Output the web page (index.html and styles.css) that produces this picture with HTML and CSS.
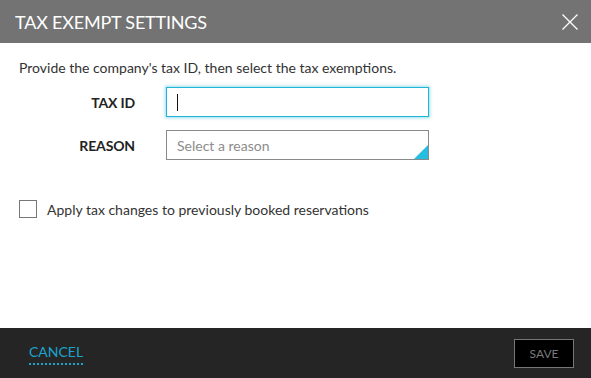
FILE: index.html
```html
<!DOCTYPE html>
<html>
<head>
<meta charset="utf-8">
<link rel="stylesheet" href="styles.css">
</head>
<body>
<div class="dialog">
  <header class="dlg-header">
    <h1 class="dlg-title">TAX EXEMPT SETTINGS</h1>
    <button class="dlg-close" aria-label="Close">
      <svg width="16" height="16" viewBox="0 0 16 16"><path d="M0.5 0.5 L15.5 15.5 M15.5 0.5 L0.5 15.5" stroke="#fff" stroke-width="1.3" fill="none"/></svg>
    </button>
  </header>
  <main class="dlg-body">
    <p class="intro">Provide the company's tax ID, then select the tax exemptions.</p>
    <div class="form-grid">
      <label class="field-label">TAX ID</label>
      <div class="input focused"><span class="caret"></span></div>
      <label class="field-label">REASON</label>
      <div class="input select"><span class="placeholder">Select a reason</span><span class="corner"></span></div>
    </div>
    <label class="check-row">
      <span class="checkbox"></span>
      <span class="check-text">Apply tax changes to previously booked reservations</span>
    </label>
  </main>
  <footer class="dlg-footer">
    <a class="cancel">CANCEL</a>
    <button class="save">SAVE</button>
  </footer>
</div>
</body>
</html>
```

FILE: styles.css
```css
html, body {
  margin: 0;
  padding: 0;
  background: #fff;
}
body {
  font-family: Lato, "Liberation Sans", sans-serif;
  color: #333;
}
.dialog {
  width: 591px;
  height: 378px;
  display: flex;
  flex-direction: column;
}
.dlg-header {
  height: 43px;
  background: #737373;
  display: flex;
  align-items: center;
  justify-content: space-between;
  padding: 0 13px 0 15px;
  box-sizing: border-box;
}
.dlg-title {
  margin: 0;
  font-size: 18px;
  font-weight: 400;
  color: #fff;
  letter-spacing: -0.2px;
}
.dlg-close {
  border: 0;
  background: none;
  padding: 0;
  width: 16px;
  height: 16px;
  display: block;
  margin-top: 1px;
}
.dlg-close svg { display: block; }
.dlg-body {
  flex: 1;
  padding: 0 0 0 19px;
}
.intro {
  margin: 16px 0 0;
  font-size: 14px;
  line-height: 18px;
  color: #333;
}
.form-grid {
  display: grid;
  grid-template-columns: 116px 263px;
  column-gap: 31px;
  row-gap: 13px;
  margin-top: 10px;
  align-items: center;
}
.field-label {
  text-align: right;
  font-size: 14px;
  font-weight: 700;
  color: #222;
  letter-spacing: -0.15px;
}
.input {
  height: 30px;
  box-sizing: border-box;
  border: 1px solid #8a8a8a;
  position: relative;
  display: flex;
  align-items: center;
  padding-left: 10px;
  background: #fff;
}
.input.focused {
  border: 1.5px solid #1fb4d8;
  box-shadow: 0 0 3px 1px rgba(31, 180, 216, 0.45);
}
.caret {
  width: 1px;
  height: 17px;
  background: #111;
}
.placeholder {
  font-size: 14px;
  color: #8c8c8c;
}
.corner {
  position: absolute;
  right: 0;
  bottom: 0;
  width: 0;
  height: 0;
  border-left: 14px solid transparent;
  border-bottom: 14px solid #27bde1;
}
.check-row {
  display: flex;
  align-items: center;
  margin-top: 40px;
}
.checkbox {
  width: 18px;
  height: 18px;
  box-sizing: border-box;
  border: 1.5px solid #777;
  background: #fff;
}
.check-text {
  margin-left: 10px;
  font-size: 14px;
  color: #333;
}
.dlg-footer {
  height: 50px;
  background: #252525;
  display: flex;
  align-items: center;
  justify-content: space-between;
  padding: 0 17px 0 29px;
  box-sizing: border-box;
}
.cancel {
  font-size: 14px;
  color: #1ba3cd;
  letter-spacing: 0;
  padding-bottom: 3px;
  border-bottom: 2px dotted #1ba3cd;
  margin-top: 2px;
}
.save {
  width: 60px;
  height: 29px;
  background: #000;
  border: 1px solid #777;
  color: #7a7a7a;
  font-family: Lato, "Liberation Sans", sans-serif;
  font-size: 12px;
  padding: 0;
  margin-top: 1px;
}
```
